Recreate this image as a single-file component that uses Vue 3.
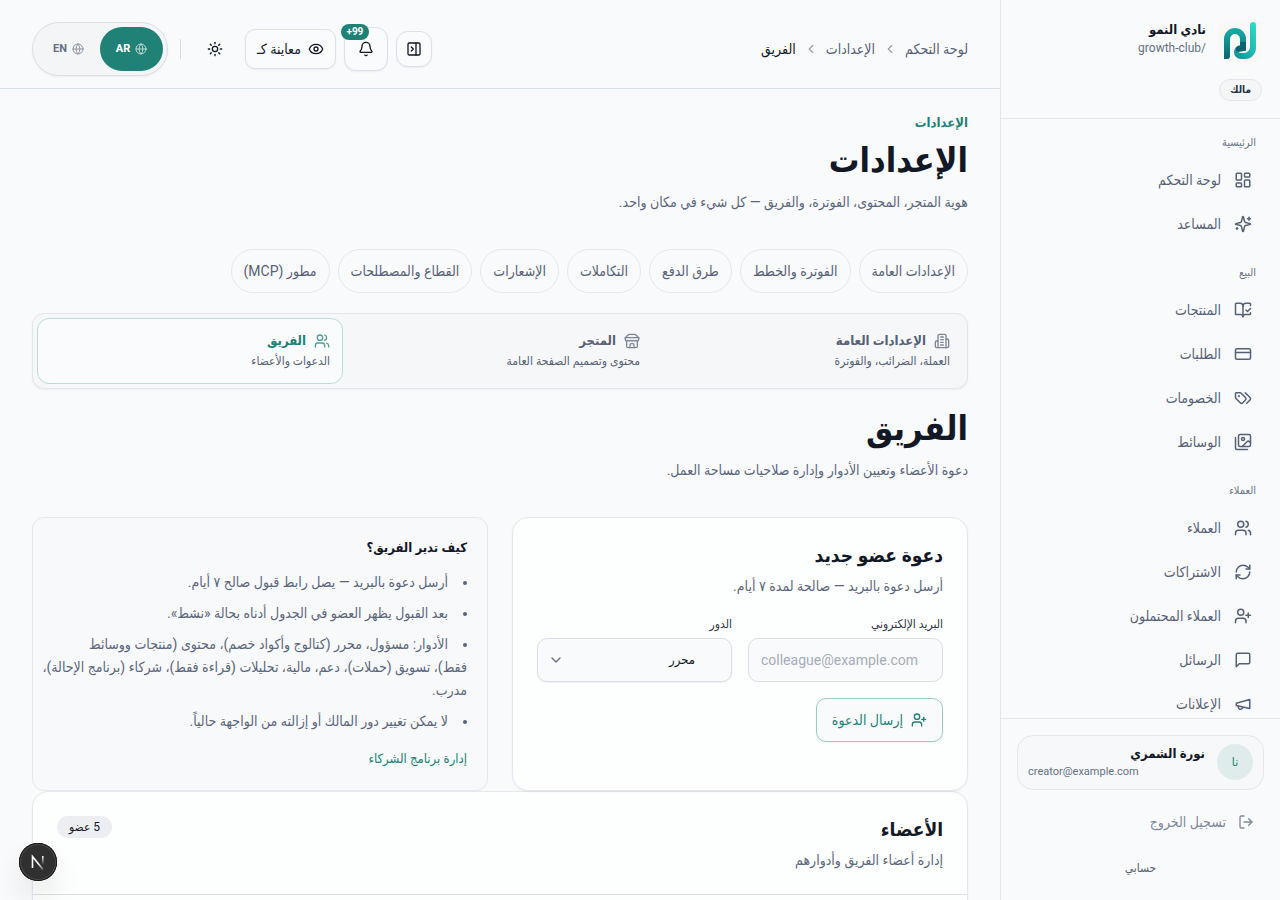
<script setup>
import { ref } from 'vue'

const icons = {
  dashboard: '<rect width="7" height="9" x="3" y="3" rx="1"/><rect width="7" height="5" x="14" y="3" rx="1"/><rect width="7" height="9" x="14" y="12" rx="1"/><rect width="7" height="5" x="3" y="16" rx="1"/>',
  sparkles: '<path d="M9.937 15.5A2 2 0 0 0 8.5 14.063l-6.135-1.582a.5.5 0 0 1 0-.962L8.5 9.936A2 2 0 0 0 9.937 8.5l1.582-6.135a.5.5 0 0 1 .963 0L14.063 8.5A2 2 0 0 0 15.5 9.937l6.135 1.581a.5.5 0 0 1 0 .964L15.5 14.063a2 2 0 0 0-1.437 1.437l-1.582 6.135a.5.5 0 0 1-.963 0z"/><path d="M20 3v4"/><path d="M22 5h-4"/><path d="M4 17v2"/><path d="M5 18H3"/>',
  book: '<path d="M12 21V7"/><path d="m16 12 2 2 4-4"/><path d="M22 6V4a1 1 0 0 0-1-1h-5a4 4 0 0 0-4 4 4 4 0 0 0-4-4H3a1 1 0 0 0-1 1v13a1 1 0 0 0 1 1h6a3 3 0 0 1 3 3 3 3 0 0 1 3-3h6a1 1 0 0 0 1-1v-1.3"/>',
  card: '<rect width="20" height="14" x="2" y="5" rx="2"/><path d="M2 10h20"/>',
  tags: '<path d="m15 5 6.3 6.3a2.4 2.4 0 0 1 0 3.4L17 19"/><path d="M9.586 5.586A2 2 0 0 0 8.172 5H3a1 1 0 0 0-1 1v5.172a2 2 0 0 0 .586 1.414L8.29 18.29a2.426 2.426 0 0 0 3.42 0l3.58-3.58a2.426 2.426 0 0 0 0-3.42z"/><circle cx="6.5" cy="9.5" r=".5" fill="currentColor"/>',
  images: '<path d="M18 22H4a2 2 0 0 1-2-2V6"/><path d="m22 13-1.296-1.296a2.41 2.41 0 0 0-3.408 0L11 18"/><circle cx="12" cy="8" r="2"/><rect width="16" height="16" x="6" y="2" rx="2"/>',
  users: '<path d="M16 21v-2a4 4 0 0 0-4-4H6a4 4 0 0 0-4 4v2"/><circle cx="9" cy="7" r="4"/><path d="M22 21v-2a4 4 0 0 0-3-3.87"/><path d="M16 3.13a4 4 0 0 1 0 7.75"/>',
  refresh: '<path d="M3 12a9 9 0 0 1 9-9 9.75 9.75 0 0 1 6.74 2.74L21 8"/><path d="M21 3v5h-5"/><path d="M21 12a9 9 0 0 1-9 9 9.75 9.75 0 0 1-6.74-2.74L3 16"/><path d="M8 16H3v5"/>',
  userPlus: '<path d="M16 21v-2a4 4 0 0 0-4-4H6a4 4 0 0 0-4 4v2"/><circle cx="9" cy="7" r="4"/><path d="M19 8v6"/><path d="M22 11h-6"/>',
  message: '<path d="M21 15a2 2 0 0 1-2 2H7l-4 4V5a2 2 0 0 1 2-2h14a2 2 0 0 1 2 2z"/>',
  megaphone: '<path d="m3 11 18-5v12L3 14v-3z"/><path d="M11.6 16.8a3 3 0 1 1-5.8-1.6"/>',
  logout: '<path d="M9 21H5a2 2 0 0 1-2-2V5a2 2 0 0 1 2-2h4"/><path d="m16 17 5-5-5-5"/><path d="M21 12H9"/>',
  panel: '<rect width="18" height="18" x="3" y="3" rx="2"/><path d="M15 3v18"/><path d="m8 9 3 3-3 3"/>',
  bell: '<path d="M10.268 21a2 2 0 0 0 3.464 0"/><path d="M3.262 15.326A1 1 0 0 0 4 17h16a1 1 0 0 0 .74-1.673C19.41 13.956 18 12.499 18 8A6 6 0 0 0 6 8c0 4.499-1.411 5.956-2.738 7.326"/>',
  eye: '<path d="M2.062 12.348a1 1 0 0 1 0-.696 10.75 10.75 0 0 1 19.876 0 1 1 0 0 1 0 .696 10.75 10.75 0 0 1-19.876 0"/><circle cx="12" cy="12" r="3"/>',
  sun: '<circle cx="12" cy="12" r="4"/><path d="M12 2v2"/><path d="M12 20v2"/><path d="m4.93 4.93 1.41 1.41"/><path d="m17.66 17.66 1.41 1.41"/><path d="M2 12h2"/><path d="M20 12h2"/><path d="m6.34 17.66-1.41 1.41"/><path d="m19.07 4.93-1.41 1.41"/>',
  globe: '<circle cx="12" cy="12" r="10"/><path d="M12 2a14.5 14.5 0 0 0 0 20 14.5 14.5 0 0 0 0-20"/><path d="M2 12h20"/>',
  building: '<path d="M6 22V4a2 2 0 0 1 2-2h8a2 2 0 0 1 2 2v18Z"/><path d="M6 12H4a2 2 0 0 0-2 2v6a2 2 0 0 0 2 2h2"/><path d="M18 9h2a2 2 0 0 1 2 2v9a2 2 0 0 1-2 2h-2"/><path d="M10 6h4"/><path d="M10 10h4"/><path d="M10 14h4"/><path d="M10 18h4"/>',
  store: '<path d="m2 7 4.41-4.41A2 2 0 0 1 7.83 2h8.34a2 2 0 0 1 1.42.59L22 7"/><path d="M4 12v8a2 2 0 0 0 2 2h12a2 2 0 0 0 2-2v-8"/><path d="M15 22v-4a2 2 0 0 0-2-2h-2a2 2 0 0 0-2 2v4"/><path d="M2 7h20"/><path d="M22 7v3a2 2 0 0 1-2 2a2.7 2.7 0 0 1-1.59-.63.7.7 0 0 0-.82 0A2.7 2.7 0 0 1 16 12a2.7 2.7 0 0 1-1.59-.63.7.7 0 0 0-.82 0A2.7 2.7 0 0 1 12 12a2.7 2.7 0 0 1-1.59-.63.7.7 0 0 0-.82 0A2.7 2.7 0 0 1 8 12a2.7 2.7 0 0 1-1.59-.63.7.7 0 0 0-.82 0A2.7 2.7 0 0 1 4 12a2 2 0 0 1-2-2V7"/>',
  chevronLeft: '<path d="m15 18-6-6 6-6"/>',
  chevronDown: '<path d="m6 9 6 6 6-6"/>'
}

const groups = [
  { label: 'الرئيسية', items: [['dashboard', 'لوحة التحكم'], ['sparkles', 'المساعد']] },
  { label: 'البيع', items: [['book', 'المنتجات'], ['card', 'الطلبات'], ['tags', 'الخصومات'], ['images', 'الوسائط']] },
  { label: 'العملاء', items: [['users', 'العملاء'], ['refresh', 'الاشتراكات'], ['userPlus', 'العملاء المحتملون'], ['message', 'الرسائل'], ['megaphone', 'الإعلانات']] }
]

const tabs = ['الإعدادات العامة', 'الفوترة والخطط', 'طرق الدفع', 'التكاملات', 'الإشعارات', 'القطاع والمصطلحات', 'مطور (MCP)']

const segments = [
  { icon: 'building', title: 'الإعدادات العامة', desc: 'العملة، الضرائب، والفوترة' },
  { icon: 'store', title: 'المتجر', desc: 'محتوى وتصميم الصفحة العامة' },
  { icon: 'users', title: 'الفريق', desc: 'الدعوات والأعضاء', active: true }
]

const tips = [
  'أرسل دعوة بالبريد — يصل رابط قبول صالح ٧ أيام.',
  'بعد القبول يظهر العضو في الجدول أدناه بحالة «نشط».',
  'الأدوار: مسؤول، محرر (كتالوج وأكواد خصم)، محتوى (منتجات ووسائط\nفقط)، تسويق (حملات)، دعم، مالية، تحليلات (قراءة فقط)، شركاء (برنامج الإحالة)،\nمدرب.',
  'لا يمكن تغيير دور المالك أو إزالته من الواجهة حالياً.'
]

const email = ref('')
const role = ref('editor')
</script>

<template>
  <div class="shell" dir="rtl" lang="ar">
    <aside class="sidebar">
      <div class="brand">
        <div class="brand-row">
          <span class="logo">
            <svg width="44" height="44" viewBox="0 0 44 44" fill="none" aria-hidden="true">
              <defs>
                <linearGradient id="logo-a" x1="0" y1="0" x2="0" y2="1">
                  <stop offset="0" stop-color="#17b0a8" />
                  <stop offset="1" stop-color="#0d6270" />
                </linearGradient>
                <linearGradient id="logo-b" x1="1" y1="0" x2="0" y2="1">
                  <stop offset="0" stop-color="#2fe0d0" />
                  <stop offset="1" stop-color="#0c8f92" />
                </linearGradient>
              </defs>
              <path d="M6 40V20a11 11 0 0 1 22 0v9h-6v-9a5 5 0 0 0-10 0v17q0 3-3 3z" fill="url(#logo-a)" />
              <path d="M38 6q0-3-3-3t-3 4v21a6 6 0 0 1-6 6h-4q-1 0-1-1t1-1h6v-6h-5a7 7 0 0 0 0 14h4a11 11 0 0 0 11-11z" fill="url(#logo-b)" />
              <path d="M22 23h6v8q-6 3-10 1-1-5 4-5z" fill="#0d6270" />
            </svg>
          </span>
          <div class="brand-text">
            <strong>نادي النمو</strong>
            <span>/growth-club</span>
          </div>
        </div>
        <span class="owner">مالك</span>
      </div>

      <nav class="nav" aria-label="القائمة">
        <section v-for="g in groups" :key="g.label" class="nav-group">
          <h2 class="nav-label">{{ g.label }}</h2>
          <a v-for="[icon, text] in g.items" :key="text" href="#" class="nav-item">
            <svg class="icon i18" viewBox="0 0 24 24" v-html="icons[icon]"></svg>
            <span>{{ text }}</span>
          </a>
        </section>
      </nav>

      <div class="side-foot">
        <div class="user">
          <span class="avatar">نا</span>
          <div class="user-text">
            <strong>نورة الشمري</strong>
            <span dir="ltr">creator@example.com</span>
          </div>
        </div>
        <button type="button" class="logout">
          <svg class="icon i16" viewBox="0 0 24 24" v-html="icons.logout"></svg>
          <span>تسجيل الخروج</span>
        </button>
        <a href="#" class="account">حسابي</a>
      </div>
    </aside>

    <div class="page">
      <header class="topbar">
        <nav class="crumbs" aria-label="مسار التنقل">
          <a href="#">لوحة التحكم</a>
          <svg class="icon i14" viewBox="0 0 24 24" v-html="icons.chevronLeft"></svg>
          <a href="#">الإعدادات</a>
          <svg class="icon i14" viewBox="0 0 24 24" v-html="icons.chevronLeft"></svg>
          <span class="current">الفريق</span>
        </nav>
        <div class="actions">
          <button type="button" class="btn panel-btn" aria-label="طي القائمة">
            <svg class="icon i16" viewBox="0 0 24 24" v-html="icons.panel"></svg>
          </button>
          <button type="button" class="btn bell-btn" aria-label="التنبيهات">
            <svg class="icon i16" viewBox="0 0 24 24" v-html="icons.bell"></svg>
            <span class="count">99+</span>
          </button>
          <button type="button" class="btn preview-btn">
            <svg class="icon i16" viewBox="0 0 24 24" v-html="icons.eye"></svg>
            <span>معاينة كـ</span>
          </button>
          <button type="button" class="theme-btn" aria-label="المظهر">
            <svg class="icon i16" viewBox="0 0 24 24" v-html="icons.sun"></svg>
          </button>
          <span class="rule"></span>
          <div class="lang">
            <button type="button" class="lang-on">
              <svg class="icon i12" viewBox="0 0 24 24" v-html="icons.globe"></svg>
              <span>AR</span>
            </button>
            <button type="button">
              <svg class="icon i12" viewBox="0 0 24 24" v-html="icons.globe"></svg>
              <span>EN</span>
            </button>
          </div>
        </div>
      </header>

      <main class="content">
        <div class="head">
          <p class="eyebrow">الإعدادات</p>
          <h1>الإعدادات</h1>
          <p class="lead">هوية المتجر، المحتوى، الفوترة، والفريق — كل شيء في مكان واحد.</p>
        </div>

        <nav class="tabs" aria-label="أقسام الإعدادات">
          <a v-for="t in tabs" :key="t" href="#">{{ t }}</a>
        </nav>

        <nav class="segments" aria-label="الأقسام الرئيسية">
          <a v-for="s in segments" :key="s.title" href="#" :class="{ active: s.active }">
            <span class="seg-title">
              <svg class="icon i16" viewBox="0 0 24 24" v-html="icons[s.icon]"></svg>
              <span>{{ s.title }}</span>
            </span>
            <span class="seg-desc">{{ s.desc }}</span>
          </a>
        </nav>

        <div class="head team-head">
          <h1>الفريق</h1>
          <p class="lead">دعوة الأعضاء وتعيين الأدوار وإدارة صلاحيات مساحة العمل.</p>
        </div>

        <div class="columns">
          <section class="card invite">
            <h2>دعوة عضو جديد</h2>
            <p class="card-sub">أرسل دعوة بالبريد — صالحة لمدة ٧ أيام.</p>
            <form @submit.prevent>
              <div class="fields">
                <div class="field">
                  <label for="email">البريد الإلكتروني</label>
                  <input id="email" v-model="email" type="email" dir="ltr" placeholder="colleague@example.com" />
                </div>
                <div class="field">
                  <label for="role">الدور</label>
                  <div class="select">
                    <select id="role" v-model="role">
                      <option value="editor">محرر</option>
                      <option value="admin">مسؤول</option>
                    </select>
                    <svg class="icon i16" viewBox="0 0 24 24" v-html="icons.chevronDown"></svg>
                  </div>
                </div>
              </div>
              <button type="submit" class="send">
                <svg class="icon i16" viewBox="0 0 24 24" v-html="icons.userPlus"></svg>
                <span>إرسال الدعوة</span>
              </button>
            </form>
          </section>

          <section class="help">
            <h3>كيف تدير الفريق؟</h3>
            <ul>
              <li v-for="t in tips" :key="t">{{ t }}</li>
            </ul>
            <a href="#">إدارة برنامج الشركاء</a>
          </section>
        </div>

        <section class="card members">
          <div class="members-head">
            <div>
              <h2>الأعضاء</h2>
              <p class="card-sub">إدارة أعضاء الفريق وأدوارهم</p>
            </div>
            <span class="total">5 عضو</span>
          </div>
          <div class="members-body"></div>
        </section>
      </main>
    </div>

    <button type="button" class="dev" aria-label="أدوات المطور">
      <svg width="38" height="38" viewBox="0 0 38 38" fill="none" aria-hidden="true">
        <defs>
          <linearGradient id="n-a" x1="20" y1="20" x2="25" y2="27" gradientUnits="userSpaceOnUse">
            <stop stop-color="#fff" />
            <stop offset="1" stop-color="#fff" stop-opacity="0.2" />
          </linearGradient>
          <linearGradient id="n-b" x1="24" y1="13" x2="24" y2="22" gradientUnits="userSpaceOnUse">
            <stop stop-color="#fff" />
            <stop offset="1" stop-color="#fff" stop-opacity="0" />
          </linearGradient>
        </defs>
        <path d="M13.500 25V13.500L24 26.500" stroke="url(#n-a)" stroke-width="1.600" />
        <path d="M23 13h1.600v9H23z" fill="url(#n-b)" />
      </svg>
    </button>
  </div>
</template>

<style>
body {
  margin: 0;
  background: #f9fafc;
}
</style>

<style scoped>
* {
  box-sizing: border-box;
}
.shell {
  display: flex;
  height: 100vh;
  background: #f9fafc;
  color: #131827;
  font-family: Roboto, "DejaVu Sans Condensed", "DejaVu Sans", sans-serif;
  font-size: 14px;
  line-height: 20px;
}
h1, h2, h3, p, ul {
  margin: 0;
  padding: 0;
}
a {
  color: inherit;
  text-decoration: none;
}
button, input, select {
  font: inherit;
  color: inherit;
  margin: 0;
}
.icon {
  display: block;
  flex: none;
  fill: none;
  stroke: currentColor;
  stroke-width: 2;
  stroke-linecap: round;
  stroke-linejoin: round;
}
.i18 { width: 18px; height: 18px; }
.i16 { width: 16px; height: 16px; }
.i14 { width: 14px; height: 14px; }
.i12 { width: 12px; height: 12px; }

.sidebar {
  flex: 0 0 280px;
  display: flex;
  flex-direction: column;
  border-inline-end: 1px solid #e3e6ec;
}
.brand {
  padding: 19px 18px 17px;
  border-bottom: 1px solid #e3e6ec;
}
.brand-row {
  display: flex;
  gap: 12px;
}
.logo {
  border-radius: 12px;
  background: #f8f8f7;
  height: 44px;
}
.brand-text {
  display: flex;
  flex-direction: column;
  padding-top: 2px;
  line-height: 18px;
}
.brand-text strong {
  font-size: 13px;
}
.brand-text span {
  font-size: 12px;
  color: #667085;
}
.owner {
  display: block;
  width: fit-content;
  margin-top: 16px;
  padding: 0 10px;
  border: 1px solid #e3e6ec;
  border-radius: 11px;
  background: #f5f6f8;
  color: #2b3242;
  font-size: 10px;
  font-weight: 700;
  line-height: 20px;
}
.nav {
  flex: 1;
  min-height: 0;
  overflow: hidden;
  padding: 14px 16px 0;
  display: flex;
  flex-direction: column;
  gap: 17px;
}
.nav-label {
  padding: 0 8px;
  margin-bottom: 5px;
  font-size: 11px;
  font-weight: 500;
  line-height: 20px;
  color: #6b7588;
}
.nav-item {
  display: flex;
  align-items: center;
  gap: 13px;
  height: 44px;
  padding: 0 12px;
  color: #566176;
}
.side-foot {
  padding: 16px 16px 10px;
  border-top: 1px solid #e3e6ec;
}
.user {
  display: flex;
  align-items: flex-start;
  gap: 12px;
  padding: 8px 10px;
  border: 1px solid #e5e7ec;
  border-radius: 16px;
  background: #f7f8fa;
}
.avatar {
  flex: none;
  width: 36px;
  height: 36px;
  border-radius: 50%;
  background: #dfeceb;
  color: #208276;
  font-size: 12px;
  line-height: 36px;
  text-align: center;
}
.user-text {
  flex: 1;
  display: flex;
  flex-direction: column;
  padding-top: 1px;
  line-height: 18px;
}
.user-text strong {
  font-size: 13px;
}
.user-text span {
  font-size: 11px;
  color: #667085;
}
.logout {
  display: flex;
  align-items: center;
  gap: 12px;
  width: 100%;
  height: 44px;
  margin-top: 10px;
  padding: 0 10px;
  border: 0;
  background: none;
  color: #7f899a;
}
.account {
  display: block;
  margin-top: 2px;
  font-size: 12px;
  line-height: 44px;
  text-align: center;
  color: #566176;
}

.page {
  flex: 1;
  min-width: 0;
  display: flex;
  flex-direction: column;
}
.topbar {
  display: flex;
  align-items: center;
  justify-content: space-between;
  padding: 22px 32px 12px;
  border-bottom: 1px solid #d9dfe8;
}
.crumbs {
  display: flex;
  align-items: center;
  gap: 8px;
  color: #566176;
}
.crumbs .icon {
  color: #98a1b0;
}
.current {
  color: #131827;
  font-weight: 500;
}
.actions {
  display: flex;
  align-items: center;
  gap: 8px;
}
.btn {
  position: relative;
  display: flex;
  align-items: center;
  justify-content: center;
  gap: 7px;
  padding: 0;
  border: 1px solid #dbe0e9;
  border-radius: 12px;
  background: #fafbfd;
  box-shadow: 0 1px 2px rgba(16, 24, 40, 0.06);
}
.panel-btn { width: 36px; height: 36px; }
.bell-btn { width: 44px; height: 44px; }
.preview-btn { height: 40px; padding: 0 11px; border-radius: 10px; }
.count {
  position: absolute;
  top: -4px;
  left: -4px;
  width: 28px;
  height: 16px;
  border-radius: 8px;
  background: #208276;
  color: #fff;
  font-size: 10px;
  font-weight: 700;
  line-height: 16px;
  text-align: center;
}
.theme-btn {
  display: flex;
  align-items: center;
  justify-content: center;
  width: 44px;
  height: 44px;
  padding: 0;
  border: 0;
  background: none;
}
.rule {
  width: 1px;
  height: 20px;
  margin: 0 4px;
  background: #d5dce6;
}
.lang {
  display: flex;
  padding: 4px;
  border: 1px solid #dddfe5;
  border-radius: 27px;
  background: #f4f5f7;
  box-shadow: 0 1px 2px rgba(16, 24, 40, 0.06);
}
.lang button {
  display: flex;
  align-items: center;
  justify-content: center;
  gap: 5px;
  width: 63px;
  height: 44px;
  padding: 0;
  border: 0;
  border-radius: 22px;
  background: none;
  color: #667085;
  font-size: 11px;
  font-weight: 700;
}
.lang .lang-on {
  background: #208276;
  color: #fff;
}
.lang .icon {
  opacity: 0.7;
}

.content {
  flex: 1;
  min-height: 0;
  overflow: hidden;
  padding: 24px 32px 0;
}
.eyebrow {
  color: #208276;
  font-size: 13px;
  font-weight: 700;
}
h1 {
  font-size: 34px;
  line-height: 40px;
  font-weight: 700;
  margin-top: 7px;
}
.lead {
  margin-top: 10px;
  line-height: 24px;
  color: #5a667b;
}
.tabs {
  display: flex;
  gap: 8px;
  margin-top: 35px;
}
.tabs a {
  padding: 0 12px;
  border: 1px solid #e5e7ed;
  border-radius: 22px;
  line-height: 42px;
  white-space: nowrap;
  color: #566176;
}
.segments {
  display: grid;
  grid-template-columns: repeat(3, 1fr);
  gap: 4px;
  margin-top: 20px;
  padding: 4px;
  border: 1px solid #e2e5ec;
  border-radius: 12px;
  background: #f6f7f9;
  box-shadow: 0 1px 2px rgba(16, 24, 40, 0.05);
}
.segments a {
  height: 66px;
  padding: 12px;
  border: 1px solid transparent;
  border-radius: 12px;
  color: #566176;
}
.segments .active {
  border-color: #bcdcd7;
  background: #fafbfd;
}
.seg-title {
  display: flex;
  align-items: center;
  gap: 8px;
  font-size: 13px;
  font-weight: 700;
}
.seg-title .icon {
  opacity: 0.75;
}
.active .seg-title {
  color: #208276;
}
.seg-desc {
  display: block;
  font-size: 12px;
}
.team-head h1 {
  margin-top: 19px;
}
.columns {
  display: grid;
  grid-template-columns: 1fr 1fr;
  gap: 24px;
  margin-top: 35px;
}
.card {
  border: 1px solid #e5e8ee;
  border-radius: 16px;
  background: #fdfefe;
  box-shadow: 0 1px 2px rgba(16, 24, 40, 0.05);
}
.card h2 {
  font-size: 19px;
  line-height: 28px;
}
.card-sub {
  margin-top: 4px;
  line-height: 24px;
  color: #5a667b;
}
.invite {
  padding: 24px;
}
.fields {
  display: grid;
  grid-template-columns: 1fr 1fr;
  gap: 16px;
  margin-top: 16px;
}
.field label {
  display: block;
  margin-bottom: 4px;
  font-size: 12px;
  color: #313848;
}
input, select {
  display: block;
  width: 100%;
  height: 44px;
  padding: 0 12px;
  border: 1px solid #dadeea;
  border-radius: 10px;
  background: #f9fafc;
}
input::placeholder {
  color: #a5adb9;
}
.select {
  position: relative;
}
select {
  appearance: none;
  padding: 0 36px;
  font-size: 13px;
  box-shadow: 0 1px 2px rgba(16, 24, 40, 0.06);
}
.select .icon {
  position: absolute;
  left: 11px;
  top: 14px;
  color: #667085;
}
.send {
  display: flex;
  align-items: center;
  gap: 8px;
  height: 44px;
  margin-top: 16px;
  padding: 0 15px;
  border: 1px solid #9ccbc4;
  border-radius: 10px;
  background: #f9fafc;
  color: #208276;
  box-shadow: 0 1px 2px rgba(16, 24, 40, 0.05);
}
.help {
  padding: 20px;
  padding-inline-end: 4px;
  border: 1px solid #e5e7ed;
  border-radius: 12px;
  background: #f8f9fb;
}
.help h3 {
  font-size: 13px;
  line-height: 20px;
}
.help ul {
  margin-top: 13px;
  list-style-position: inside;
  color: #5a667b;
}
.help li {
  line-height: 23px;
  margin-bottom: 8px;
  white-space: pre-line;
}
.help a {
  display: block;
  margin-top: 15px;
  font-size: 13px;
  line-height: 22px;
  color: #208276;
}
.members-head {
  display: flex;
  justify-content: space-between;
  align-items: flex-start;
  padding: 24px 24px 22px;
  border-bottom: 1px solid #dde2e6;
}
.members-body {
  height: 240px;
}
.total {
  padding: 0 12px;
  border-radius: 11px;
  background: #eceef2;
  font-size: 12px;
  line-height: 22px;
}
.dev {
  position: fixed;
  left: 19px;
  bottom: 19px;
  width: 38px;
  height: 38px;
  padding: 0;
  border: 0;
  border-radius: 50%;
  background: #303030;
  box-shadow: inset 0 0 0 1px #171717, inset 0 0 0 2px #4a4a4a, 0 16px 32px -8px rgba(0, 0, 0, 0.24);
}
</style>
